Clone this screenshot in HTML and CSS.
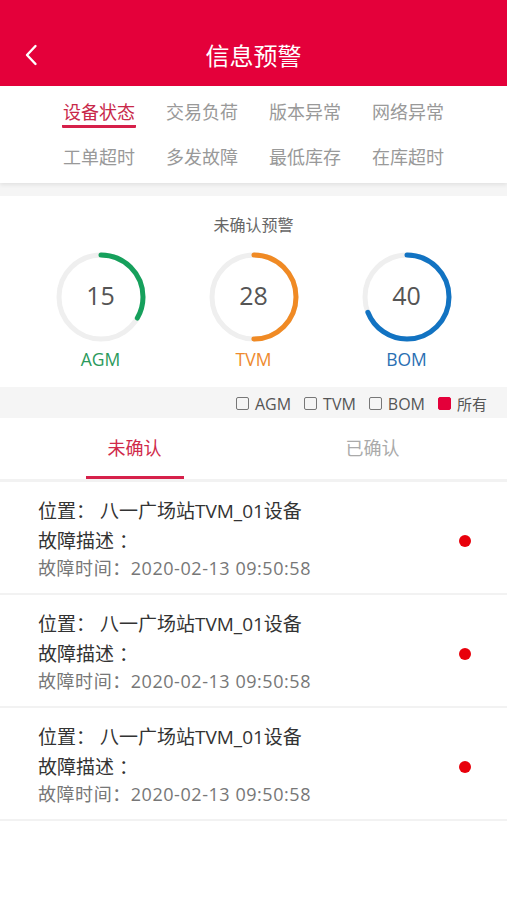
FILE: index.html
```html
<!DOCTYPE html>
<html lang="zh-CN">
<head>
<meta charset="utf-8">
<title>信息预警</title>
<link rel="stylesheet" href="styles.css">
</head>
<body>
<header class="topbar">
  <span class="back">
    <svg width="14" height="22" viewBox="0 0 14 22"><path d="M11.5 2 L3 11 L11.5 20" fill="none" stroke="#fff" stroke-width="2.4" stroke-linecap="round" stroke-linejoin="round"/></svg>
  </span>
  <h1 class="title">信息预警</h1>
</header>

<nav class="cats">
  <div class="cat"><span class="cat-txt active">设备状态</span></div>
  <div class="cat"><span class="cat-txt">交易负荷</span></div>
  <div class="cat"><span class="cat-txt">版本异常</span></div>
  <div class="cat"><span class="cat-txt">网络异常</span></div>
  <div class="cat"><span class="cat-txt">工单超时</span></div>
  <div class="cat"><span class="cat-txt">多发故障</span></div>
  <div class="cat"><span class="cat-txt">最低库存</span></div>
  <div class="cat"><span class="cat-txt">在库超时</span></div>
</nav>

<div class="gap"></div>

<section class="stats">
  <div class="stats-title">未确认预警</div>
  <div class="rings">
    <div class="ring-item">
      <div class="ring">
        <svg width="92" height="92" viewBox="0 0 92 92">
          <circle cx="46" cy="46" r="42" fill="none" stroke="#efefef" stroke-width="5"/>
          <circle cx="46" cy="46" r="42" fill="none" stroke="#16a05c" stroke-width="5" stroke-linecap="round" stroke-dasharray="87.9 263.9" transform="rotate(-90 46 46)"/>
        </svg>
        <span class="ring-num">15</span>
      </div>
      <div class="ring-label agm">AGM</div>
    </div>
    <div class="ring-item">
      <div class="ring">
        <svg width="92" height="92" viewBox="0 0 92 92">
          <circle cx="46" cy="46" r="42" fill="none" stroke="#efefef" stroke-width="5"/>
          <circle cx="46" cy="46" r="42" fill="none" stroke="#f08a24" stroke-width="5" stroke-linecap="round" stroke-dasharray="131.9 263.9" transform="rotate(-90 46 46)"/>
        </svg>
        <span class="ring-num">28</span>
      </div>
      <div class="ring-label tvm">TVM</div>
    </div>
    <div class="ring-item">
      <div class="ring">
        <svg width="92" height="92" viewBox="0 0 92 92">
          <circle cx="46" cy="46" r="42" fill="none" stroke="#efefef" stroke-width="5"/>
          <circle cx="46" cy="46" r="42" fill="none" stroke="#1273c2" stroke-width="5" stroke-linecap="round" stroke-dasharray="182 263.9" transform="rotate(-90 46 46)"/>
        </svg>
        <span class="ring-num">40</span>
      </div>
      <div class="ring-label bom">BOM</div>
    </div>
  </div>
</section>

<div class="filters">
  <label class="chk"><span class="box"></span>AGM</label>
  <label class="chk"><span class="box"></span>TVM</label>
  <label class="chk"><span class="box"></span>BOM</label>
  <label class="chk"><span class="box on"></span><span class="cjk">所有</span></label>
</div>

<div class="tabs">
  <div class="tab"><span class="tab-txt active">未确认</span></div>
  <div class="tab"><span class="tab-txt">已确认</span></div>
</div>

<ul class="list">
  <li class="item">
    <div class="info">
      <div class="l1">位置： 八一广场站TVM_01设备</div>
      <div class="l2">故障描述 ：</div>
      <div class="l3">故障时间：2020-02-13 09:50:58</div>
    </div>
    <span class="dot"></span>
  </li>
  <li class="item">
    <div class="info">
      <div class="l1">位置： 八一广场站TVM_01设备</div>
      <div class="l2">故障描述 ：</div>
      <div class="l3">故障时间：2020-02-13 09:50:58</div>
    </div>
    <span class="dot"></span>
  </li>
  <li class="item">
    <div class="info">
      <div class="l1">位置： 八一广场站TVM_01设备</div>
      <div class="l2">故障描述 ：</div>
      <div class="l3">故障时间：2020-02-13 09:50:58</div>
    </div>
    <span class="dot"></span>
  </li>
</ul>
</body>
</html>
```
FILE: styles.css
```css
* { box-sizing: border-box; }
html, body { margin: 0; padding: 0; }
body {
  width: 507px;
  background: #fff;
  font-family: "Open Sans", "Noto Sans CJK SC", sans-serif;
  color: #333;
}

.topbar {
  height: 86px;
  background: #e4003a;
  padding-top: 23px;
  display: flex;
  align-items: center;
  position: relative;
}
.back {
  position: absolute;
  left: 24px;
  top: 44px;
  display: flex;
}
.title {
  margin: 0;
  width: 100%;
  height: 62px;
  line-height: 62px;
  text-align: center;
  color: #fff;
  font-size: 24px;
  font-weight: normal;
  font-family: "Noto Sans CJK SC", sans-serif;
}

.cats {
  display: grid;
  grid-template-columns: repeat(4, 103px);
  justify-content: center;
  row-gap: 20px;
  padding: 13px 0 14px;
  background: #fff;
  box-shadow: 0 2px 4px rgba(0,0,0,0.08);
  position: relative;
}
.cat { text-align: center; height: 25px; }
.cat-txt {
  display: inline-block;
  font-family: "Noto Sans CJK SC", sans-serif;
  font-size: 18px;
  line-height: 25px;
  color: #999;
  padding: 0 1px 1px;
}
.cat-txt.active {
  color: #c8284a;
  border-bottom: 3px solid #d6204a;
  border-radius: 0 0 1px 1px;
}

.gap { height: 13px; background: #f5f5f5; }

.stats {
  background: #fff;
  padding: 18px 0 17px;
}
.stats-title {
  text-align: center;
  font-family: "Noto Sans CJK SC", sans-serif;
  font-size: 16px;
  line-height: 20px;
  color: #666;
}
.rings {
  display: grid;
  grid-template-columns: repeat(3, 153px);
  justify-content: center;
  margin-top: 17px;
}
.ring-item { display: flex; flex-direction: column; align-items: center; }
.ring {
  width: 92px;
  height: 92px;
  position: relative;
  display: flex;
  align-items: center;
  justify-content: center;
}
.ring svg { position: absolute; left: 0; top: 0; }
.ring-num {
  position: relative;
  font-size: 25px;
  line-height: 30px;
  margin-top: -4px;
  color: #555;
}
.ring-label {
  margin-top: 5px;
  font-size: 17.5px;
  line-height: 22px;
}
.agm { color: #2b9a5c; }
.tvm { color: #ee8a2e; }
.bom { color: #2a6fb3; }

.filters {
  height: 31px;
  background: #f5f5f5;
  display: flex;
  justify-content: flex-end;
  align-items: center;
  padding-right: 20px;
  gap: 13px;
  padding-top: 2px;
}
.chk {
  display: flex;
  align-items: center;
  font-size: 16px;
  color: #555;
}
.cjk { font-size: 15px; font-family: "Noto Sans CJK SC", sans-serif; }
.box {
  width: 13px;
  height: 13px;
  border: 1px solid #777;
  border-radius: 2px;
  margin-right: 6px;
}
.box.on {
  background: #e4003a;
  border-color: #e4003a;
}

.tabs {
  display: grid;
  grid-template-columns: repeat(2, 238px);
  justify-content: center;
  height: 64px;
  background: #fff;
  border-bottom: 3px solid #f2f2f2;
}
.tab {
  display: flex;
  justify-content: center;
}
.tab-txt {
  width: 98px;
  text-align: center;
  font-family: "Noto Sans CJK SC", sans-serif;
  font-size: 18px;
  line-height: 58px;
  color: #aaa;
  height: 61px;
}
.tab-txt.active {
  color: #d02b4b;
  border-bottom: 3px solid #d6204a;
}

.list { list-style: none; margin: 0; padding: 0; }
.item {
  display: flex;
  align-items: center;
  padding: 16px 36px 15px 38px;
  border-bottom: 2px solid #f2f2f2;
  height: 113px;
}
.info { flex: 1; }
.l1, .l2 { font-size: 19px; color: #333; }
.l1 { line-height: 26px; }
.l2 { line-height: 34px; }
.l3 { font-size: 18px; line-height: 20px; color: #777; letter-spacing: 0.55px; }
.dot {
  width: 12px;
  height: 12px;
  border-radius: 50%;
  background: #e8000b;
  margin-top: 6px;
}
```
